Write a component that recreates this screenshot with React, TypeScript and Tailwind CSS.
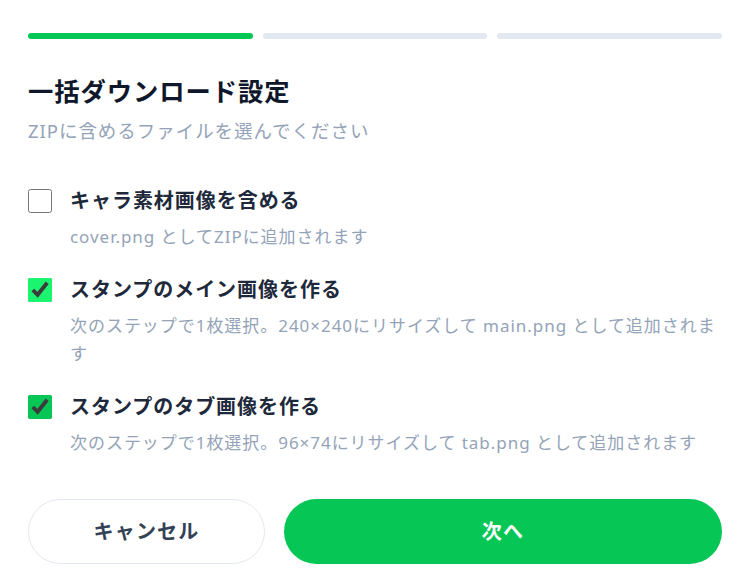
import React, { useState } from 'react';

const font = { fontFamily: '"Noto Sans", "Noto Sans CJK JP", sans-serif' };

interface Option {
  id: string;
  label: string;
  desc: string;
  accent: string;
}

const options: Option[] = [
  { id: 'cover', label: 'キャラ素材画像を含める', desc: 'cover.png としてZIPに追加されます', accent: 'accent-[#06c755]' },
  { id: 'main', label: 'スタンプのメイン画像を作る', desc: '次のステップで1枚選択。240×240にリサイズして main.png として追加されます', accent: 'accent-[#1bf46f]' },
  { id: 'tab', label: 'スタンプのタブ画像を作る', desc: '次のステップで1枚選択。96×74にリサイズして tab.png として追加されます', accent: 'accent-[#06c755]' },
];

const App: React.FC = () => {
  const [checked, setChecked] = useState<Record<string, boolean>>({ cover: false, main: true, tab: true });

  const toggle = (id: string) => setChecked({ ...checked, [id]: !checked[id] });

  return (
    <div className="w-[750px] h-[579px] bg-white px-7 pt-[33px] tracking-[0.06em]" style={font}>
      {/* steps */}
      <div className="flex gap-2.5">
        <div className="h-1.5 flex-1 rounded-full bg-[#06c755]" />
        <div className="h-1.5 flex-1 rounded-full bg-[#e2e8f0]" />
        <div className="h-1.5 flex-1 rounded-full bg-[#e2e8f0]" />
      </div>

      <h1 className="mt-[36px] text-[25.3px] leading-8 font-bold text-[#0f172a]">一括ダウンロード設定</h1>
      <p className="mt-[10px] text-[18.5px] leading-7 text-[#94a3b8]">ZIPに含めるファイルを選んでください</p>

      <div className="mt-[42px] flex flex-col gap-[25px]">
        {options.map(o => (
          <label key={o.id} className="flex gap-[18px] cursor-pointer">
            <div className="h-7 flex items-center shrink-0">
              <input
                type="checkbox"
                checked={checked[o.id]}
                onChange={() => toggle(o.id)}
                className={`w-6 h-6 m-0 ${o.accent}`}
              />
            </div>
            <div>
              <div className="text-[20px] leading-7 font-bold text-[#1e293b]">{o.label}</div>
              <div className="mt-2 text-[17px] leading-7 text-[#94a3b8]">{o.desc}</div>
            </div>
          </label>
        ))}
      </div>

      <div className="mt-[42px] flex gap-[19px]">
        <button className="w-[237px] h-[65px] rounded-full border border-[#e2e8f0] bg-white text-[20px] font-bold text-[#334155] tracking-[0.06em]">
          キャンセル
        </button>
        <button className="flex-1 h-[65px] rounded-full bg-[#06c755] text-[20px] font-bold text-white tracking-[0.06em]">
          次へ
        </button>
      </div>
    </div>
  );
};

export default App;
